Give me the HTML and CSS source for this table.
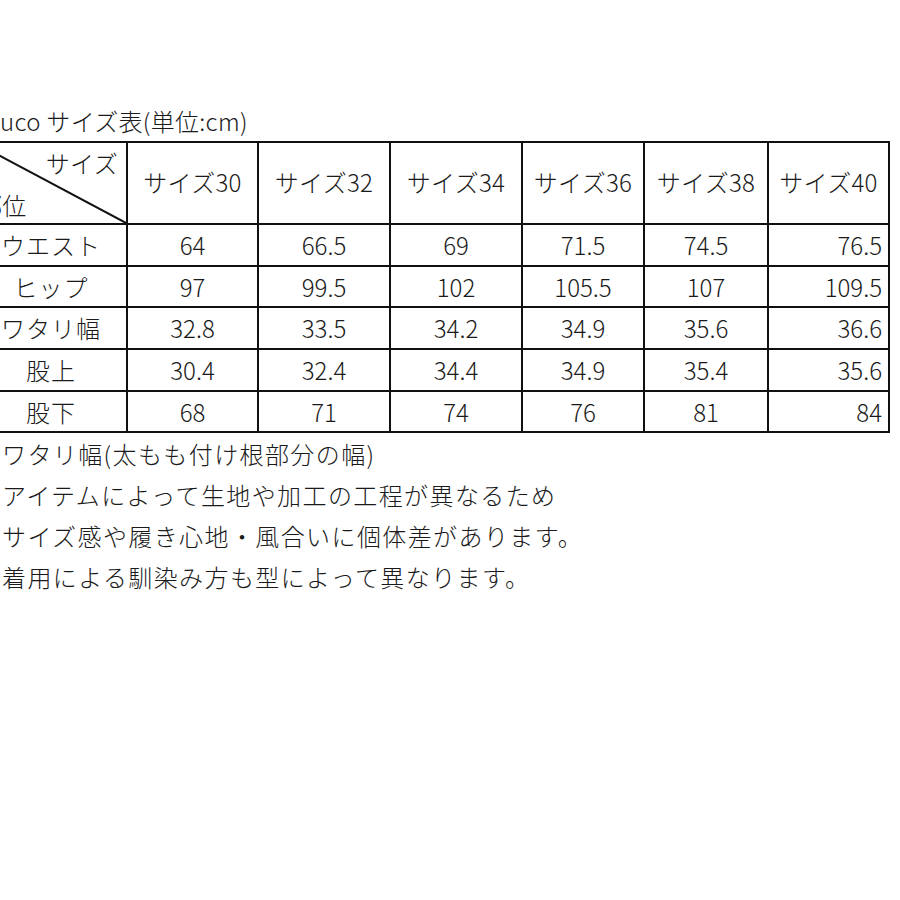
FILE: index.html
```html
<!DOCTYPE html>
<html lang="ja">
<head>
<meta charset="utf-8">
<link rel="stylesheet" href="styles.css">
</head>
<body>
<div class="page">
  <div class="title">uco サイズ表(単位:cm)</div>
  <table class="chart">
    <colgroup>
      <col class="c0"><col class="c1"><col class="c2"><col class="c3"><col class="c4"><col class="c5"><col class="c6">
    </colgroup>
    <tr class="head">
      <th class="corner">
        <svg class="diag" viewBox="0 0 100 100" preserveAspectRatio="none"><line x1="0" y1="0" x2="100" y2="100" stroke="#111" stroke-width="2" vector-effect="non-scaling-stroke"/></svg>
        <span class="size-label">サイズ</span>
        <span class="part-label">部位</span>
      </th>
      <th>サイズ30</th><th>サイズ32</th><th>サイズ34</th><th>サイズ36</th><th>サイズ38</th><th>サイズ40</th>
    </tr>
    <tr class="r42"><td class="lbl">ウエスト</td><td>64</td><td>66.5</td><td>69</td><td>71.5</td><td>74.5</td><td class="last">76.5</td></tr>
    <tr class="r41"><td class="lbl">ヒップ</td><td>97</td><td>99.5</td><td>102</td><td>105.5</td><td>107</td><td class="last">109.5</td></tr>
    <tr class="r42"><td class="lbl">ワタリ幅</td><td>32.8</td><td>33.5</td><td>34.2</td><td>34.9</td><td>35.6</td><td class="last">36.6</td></tr>
    <tr class="r42"><td class="lbl">股上</td><td>30.4</td><td>32.4</td><td>34.4</td><td>34.9</td><td>35.4</td><td class="last">35.6</td></tr>
    <tr class="r41"><td class="lbl">股下</td><td>68</td><td>71</td><td>74</td><td>76</td><td>81</td><td class="last">84</td></tr>
  </table>
  <div class="notes">
    <p>ワタリ幅(太もも付け根部分の幅)</p>
    <p>アイテムによって生地や加工の工程が異なるため</p>
    <p>サイズ感や履き心地・風合いに個体差があります。</p>
    <p>着用による馴染み方も型によって異なります。</p>
  </div>
</div>
</body>
</html>
```

FILE: styles.css
```css
html, body {
  margin: 0;
  padding: 0;
  background: #ffffff;
}
body {
  width: 900px;
  height: 900px;
  overflow: hidden;
  font-family: "Noto Sans CJK JP", "Noto Sans", sans-serif;
  font-weight: 300;
  color: #1a1a1a;
}
.page {
  padding-top: 106px;
}
.title {
  font-size: 24px;
  line-height: 30px;
  height: 30px;
  letter-spacing: 0.3px;
  white-space: nowrap;
}
.chart {
  margin-top: 5px;
  margin-left: -26px;
  border-collapse: collapse;
  table-layout: fixed;
  width: 914px;
  font-size: 24px;
}
.c0 { width: 152px; }
.c1 { width: 131px; }
.c2 { width: 132px; }
.c3 { width: 132px; }
.c4 { width: 122px; }
.c5 { width: 124px; }
.c6 { width: 121px; }
.chart th, .chart td {
  border: 2px solid #111;
  padding: 0;
  text-align: center;
  vertical-align: middle;
  font-weight: 300;
  white-space: nowrap;
  line-height: 1;
}
.chart th {
  padding-bottom: 3px;
  letter-spacing: 0.3px;
}
.lbl {
  letter-spacing: 1px;
}
.head { height: 82px; }
.r42 { height: 42px; }
.r41 { height: 41px; }
.chart td.last {
  text-align: right;
  padding-right: 6px;
}
.corner {
  position: relative;
}
.diag {
  position: absolute;
  left: 0;
  top: 0;
  width: 100%;
  height: 100%;
}
.size-label {
  position: absolute;
  right: 8px;
  top: 8px;
}
.part-label {
  position: absolute;
  left: 2px;
  bottom: 6px;
}
.notes {
  font-size: 24px;
  line-height: 41px;
  padding-left: 2px;
  letter-spacing: 1.4px;
}
.notes p {
  margin: 0;
  white-space: nowrap;
}
```
